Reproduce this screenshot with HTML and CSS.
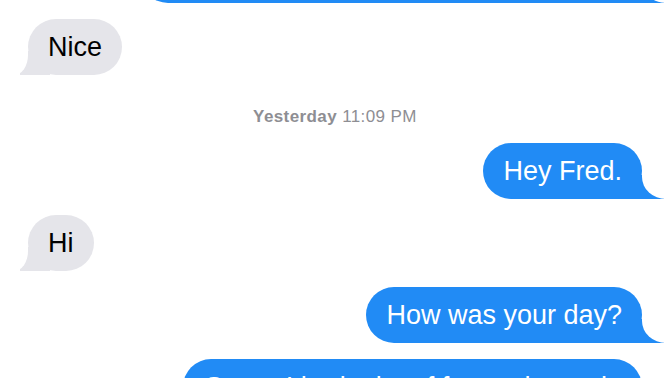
FILE: index.html
```html
<!DOCTYPE html>
<html lang="en">
<head>
    <meta charset="UTF-8">
    <meta name="viewport" content="width=device-width, initial-scale=1.0">
    <title>Messages</title>
    <link rel="stylesheet" href="styles.css">
</head>
<body>
    <main class="thread">
        <div class="bubble sent first">Sounds good, see you at the gym then</div>
        <div class="bubble received">Nice</div>

        <p class="timestamp"><strong>Yesterday</strong> 11:09 PM</p>

        <div class="bubble sent">Hey Fred.</div>
        <div class="bubble received">Hi</div>
        <div class="bubble sent">How was your day?</div>
        <div class="bubble sent">Great, I had a lot of fun at the park.</div>
    </main>
</body>
</html>
```

FILE: styles.css
```css
:root {
    --blue: #218bf5;
    --gray: #e5e5ea;
    --bg: #ffffff;
    --meta: #8e8e93;
    --font-family: 'Liberation Sans', Arial, sans-serif;
}

* {
    margin: 0;
    padding: 0;
    box-sizing: border-box;
}

body {
    font-family: var(--font-family);
    background: var(--bg);
    overflow: hidden;
}

.thread {
    display: flex;
    flex-direction: column;
    gap: 16px;
    padding: 0 30px 0 28px;
}

.bubble {
    position: relative;
    isolation: isolate;
    padding: 12px 20px;
    font-size: 27px;
    line-height: 32px;
    border-radius: 28px;
    white-space: nowrap;
}

/* tail: a filled block, with a rounded cut-out laid over it */
.bubble::before,
.bubble::after {
    content: "";
    position: absolute;
    bottom: 0;
    height: 24px;
}

.bubble::before {
    z-index: -2;
}

.bubble::after {
    z-index: -1;
    background: var(--bg);
}

.bubble.sent {
    align-self: flex-end;
    background: var(--blue);
    color: #fff;
}

.bubble.sent::before {
    right: -22px;
    width: 50px;
    background: var(--blue);
}

.bubble.sent::after {
    right: -40px;
    width: 40px;
    border-bottom-left-radius: 24px 22px;
}

.bubble.received {
    align-self: flex-start;
    background: var(--gray);
    color: #000;
}

.bubble.received::before {
    left: -8px;
    width: 30px;
    background: var(--gray);
}

.bubble.received::after {
    left: -30px;
    width: 30px;
    border-bottom-right-radius: 14px 20px;
}

.bubble.first {
    margin-top: -53px;
}

.timestamp {
    margin-top: 16px;
    text-align: center;
    font-size: 17px;
    line-height: 20px;
    color: var(--meta);
    letter-spacing: 0.4px;
}

.timestamp strong {
    font-weight: 600;
}
```
